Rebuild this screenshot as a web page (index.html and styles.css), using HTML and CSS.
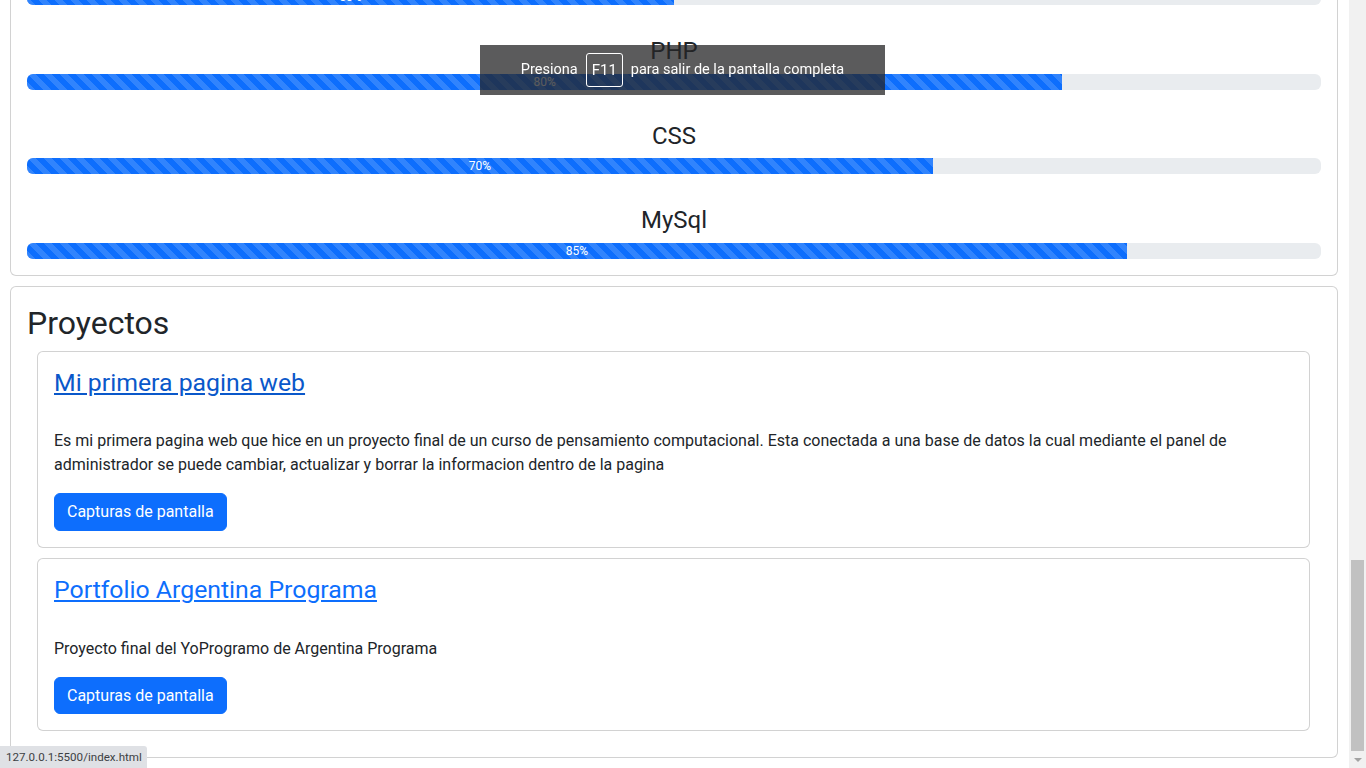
FILE: index.html
```html
<!DOCTYPE html>
<html lang="es">
<head>
<meta charset="utf-8">
<title>Portfolio</title>
<link rel="stylesheet" href="styles.css">
</head>
<body>
<main class="page">
  <section class="card skills">
    <div class="skill">
      <h4 class="skill-name">HTML</h4>
      <div class="progress"><div class="progress-bar" style="width:50%">50%</div></div>
    </div>
    <div class="skill">
      <h4 class="skill-name">PHP</h4>
      <div class="progress"><div class="progress-bar" style="width:80%">80%</div></div>
    </div>
    <div class="skill">
      <h4 class="skill-name">CSS</h4>
      <div class="progress"><div class="progress-bar" style="width:70%">70%</div></div>
    </div>
    <div class="skill">
      <h4 class="skill-name">MySql</h4>
      <div class="progress"><div class="progress-bar" style="width:85%">85%</div></div>
    </div>
  </section>

  <section class="card projects">
    <h2 class="section-title">Proyectos</h2>
    <article class="card project">
      <h4 class="project-title"><a href="index.html" class="link-hover">Mi primera pagina web</a></h4>
      <p class="project-text">Es mi primera pagina web que hice en un proyecto final de un curso de pensamiento computacional. Esta conectada a una base de datos la cual mediante el panel de administrador se puede cambiar, actualizar y borrar la informacion dentro de la pagina</p>
      <a href="#" class="btn">Capturas de pantalla</a>
    </article>
    <article class="card project">
      <h4 class="project-title"><a href="#">Portfolio Argentina Programa</a></h4>
      <p class="project-text">Proyecto final del YoProgramo de Argentina Programa</p>
      <a href="#" class="btn">Capturas de pantalla</a>
    </article>
  </section>
</main>

<div class="fullscreen-toast">
  <span>Presiona</span><span class="key">F11</span><span>para salir de la pantalla completa</span>
</div>

<div class="status-bar">127.0.0.1:5500/index.html</div>

<div class="scrollbar">
  <div class="scroll-track"><div class="scroll-thumb"></div></div>
  <div class="scroll-arrow down"></div>
</div>
</body>
</html>
```
FILE: styles.css
```css
html, body {
  margin: 0;
  height: 768px;
  overflow: hidden;
}
body {
  font-family: Roboto, "Liberation Sans", sans-serif;
  font-size: 16px;
  line-height: 1.5;
  color: #212529;
  background: #fff;
}
*, *::before, *::after { box-sizing: border-box; }

.page {
  width: 1349px;
  padding: 0 11px 11px 10px;
  margin-top: -65px;
}

.card {
  border: 1px solid rgba(0, 0, 0, 0.175);
  border-radius: 6px;
  background: #fff;
}

.skills {
  padding: 16px;
}
.skill + .skill { margin-top: 32px; }
.skill-name {
  margin: 0 0 8px;
  font-size: 24px;
  font-weight: 400;
  line-height: 1.2;
  text-align: center;
}
.progress {
  display: flex;
  height: 16px;
  background: #e9ecef;
  border-radius: 6px;
  overflow: hidden;
  font-size: 12px;
  line-height: 16px;
}
.progress-bar {
  background-color: #0d6efd;
  background-image: linear-gradient(45deg,
    rgba(255,255,255,.15) 25%, transparent 25%, transparent 50%,
    rgba(255,255,255,.15) 50%, rgba(255,255,255,.15) 75%, transparent 75%, transparent);
  background-size: 16px 16px;
  color: #fff;
  text-align: center;
  white-space: nowrap;
}

.projects {
  margin-top: 10px;
  padding: 16px;
}
.section-title {
  margin: 0 0 9px;
  padding-top: 2px;
  font-size: 32px;
  font-weight: 400;
  line-height: 36.4px;
}
.project {
  margin: 0 11px 10px 10px;
  padding: 16px;
}
.project:last-child { margin-bottom: 10px; }
.project-title {
  margin: 0 0 32px;
  font-size: 24.8px;
  font-weight: 400;
  line-height: 1.2;
}
.project-title a {
  color: #0d6efd;
  text-decoration: underline;
  text-underline-offset: 2px;
}
.project-title a.link-hover { color: #0a58ca; }
.project-text {
  margin: 0 0 16px;
}
.btn {
  display: inline-block;
  padding: 6px 12px;
  border: 1px solid #0d6efd;
  border-radius: 6px;
  background: #0d6efd;
  color: #fff;
  text-decoration: none;
  font-size: 16px;
  line-height: 23.5px;
}

.fullscreen-toast {
  position: fixed;
  left: 480px;
  top: 45px;
  width: 405px;
  height: 50px;
  display: flex;
  align-items: center;
  justify-content: center;
  gap: 8px;
  background: rgba(36, 36, 38, 0.75);
  color: #fff;
  font-size: 14.5px;
}
.fullscreen-toast .key {
  display: flex;
  align-items: center;
  height: 34px;
  padding: 0 5px;
  border: 1px solid #fff;
  border-radius: 3px;
  font-size: 15px;
}

.status-bar {
  position: fixed;
  left: 0;
  bottom: 0;
  height: 22px;
  padding: 0 5px 0 6px;
  background: #dfe1e5;
  border-top-right-radius: 3px;
  color: #3c4043;
  font-size: 11.6px;
  line-height: 22px;
}

.scrollbar {
  position: fixed;
  right: 0;
  top: 0;
  width: 17px;
  height: 768px;
  background: #f1f1f1;
  display: flex;
  flex-direction: column;
}
.scroll-track {
  flex: 1;
  position: relative;
}
.scroll-thumb {
  position: absolute;
  left: 2px;
  right: 2px;
  top: 560px;
  bottom: 0;
  background: #c1c1c1;
}
.scroll-arrow {
  height: 17px;
  display: flex;
  align-items: center;
  justify-content: center;
}
.scroll-arrow.down::before {
  content: "";
  border-left: 4px solid transparent;
  border-right: 4px solid transparent;
  border-top: 4px solid #a3a3a3;
}
```
